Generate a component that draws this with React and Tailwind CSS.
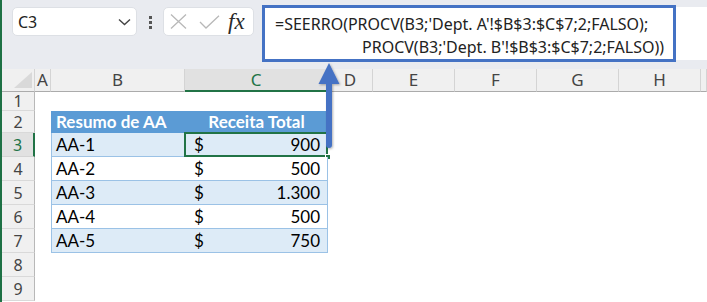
import React from "react";

const COLS = ["A", "B", "C", "D", "E", "F", "G", "H", ""];

const DATA = [
  { id: "AA-1", v: "900" },
  { id: "AA-2", v: "500" },
  { id: "AA-3", v: "1.300" },
  { id: "AA-4", v: "500" },
  { id: "AA-5", v: "750" },
];

function RowHeader({ n, active }) {
  return (
    <div
      className={
        "flex items-center justify-center border-b text-[16px] " +
        (active
          ? "bg-[#e1e1e1] text-[#217346] border-b-[#d4d4d4] border-r-2 border-r-[#217346]"
          : "bg-[#f0f0f0] text-[#444] border-b-[#d9d9d9] border-r border-r-[#b8b8b8]")
      }
      style={{ fontFamily: "'Noto Sans', sans-serif" }}
    >
      {n}
    </div>
  );
}

function ColHeader({ l, active }) {
  return (
    <div
      className={
        "flex items-center justify-center border-r border-r-[#d4d4d4] text-[17px] " +
        (active
          ? "bg-[#e1e1e1] text-[#217346] border-b-2 border-b-[#217346]"
          : "bg-[#f0f0f0] text-[#444] border-b border-b-[#ababab]")
      }
      style={{ fontFamily: "'Noto Sans', sans-serif" }}
    >
      {l}
    </div>
  );
}

export default function App() {
  const cell = "flex items-center";
  const font = { fontFamily: "Lato, 'Noto Sans', sans-serif" };
  return (
    <div className="relative flex h-[302px] w-[707px] overflow-hidden bg-white">
      <div className="w-[2px] shrink-0 bg-[#1e7145]" />
      <div className="flex min-w-0 flex-1 flex-col">
        {/* top bar */}
        <div
          className="flex h-[69px] shrink-0 items-start bg-[#e9ebf0]"
          style={{ fontFamily: "'Noto Sans', sans-serif" }}
        >
          <div className="ml-[10px] mt-[7px] flex h-[29px] w-[125px] items-center justify-between rounded-[5px] border border-[#dde0e5] bg-white pl-[5px] pr-[5px]">
            <span className="text-[16px] text-[#222]">C3</span>
            <svg width="13" height="8" viewBox="0 0 13 8">
              <path d="M1 1.5 L6.5 6.5 L12 1.5" fill="none" stroke="#444" strokeWidth="1.4" />
            </svg>
          </div>
          <div className="mt-[16px] flex w-[26px] flex-col items-center gap-[2px]">
            <div className="h-[3px] w-[3px] bg-[#555]" />
            <div className="h-[3px] w-[3px] bg-[#555]" />
            <div className="h-[3px] w-[3px] bg-[#555]" />
          </div>
          <div className="mt-[7px] flex h-[29px] w-[91px] items-center rounded-[5px] border border-[#dde0e5] bg-white pl-[6px]">
            <svg width="17" height="15" viewBox="0 0 17 15">
              <path d="M1 0.5 L16 14.5 M16 0.5 L1 14.5" stroke="#b8b8b8" strokeWidth="1.3" fill="none" />
            </svg>
            <svg className="ml-[12px]" width="21" height="14" viewBox="0 0 21 14">
              <path d="M1 7 L7 13 L20 0.8" stroke="#b8b8b8" strokeWidth="1.3" fill="none" />
            </svg>
            <span
              className="ml-[8px] text-[23px] italic leading-none text-[#2a2a2a]"
              style={{ fontFamily: "'Liberation Serif', serif" }}
            >
              fx
            </span>
          </div>
          <div className="ml-[8px] mt-[5px] h-[57px] w-[414px] border-[3px] border-[#4472c4] bg-white pl-[10px] pt-[5px] text-[16px] leading-[23px] text-[#222]">
            <div className="whitespace-nowrap">=SEERRO(PROCV(B3;'Dept. A'!$B$3:$C$7;2;FALSO);</div>
            <div className="whitespace-nowrap pl-[87px]">PROCV(B3;'Dept. B'!$B$3:$C$7;2;FALSO))</div>
          </div>
          <div className="mt-[7px] h-[53px] flex-1 bg-white" />
        </div>

        {/* sheet */}
        <div className="grid grid-cols-[33px_16px_134px_143px_45px_82px_82px_82px_82px_1fr] grid-rows-[23px_19px_22px_repeat(7,24px)]">
          {/* header row */}
          <div className="relative border-b border-r border-b-[#ababab] border-r-[#d4d4d4] bg-[#f0f0f0]">
            <svg className="absolute bottom-[3px] right-[2px]" width="18" height="16" viewBox="0 0 18 16">
              <path d="M0 16 L18 16 L18 0 Z" fill="#d9d9d9" />
            </svg>
          </div>
          {COLS.map((l) => (
            <ColHeader key={l || "x"} l={l} active={l === "C"} />
          ))}

          {/* row 1 */}
          <RowHeader n={1} />
          {COLS.map((l, i) => (
            <div key={"r1" + i} />
          ))}

          {/* row 2 */}
          <RowHeader n={2} />
          <div />
          <div
            className={cell + " bg-[#5b9bd5] pl-[5px] text-[17px] font-bold text-white"}
            style={font}
          >
            Resumo de AA
          </div>
          <div
            className={cell + " justify-center bg-[#5b9bd5] text-[17px] font-bold text-white"}
            style={font}
          >
            Receita Total
          </div>
          {COLS.slice(3).map((l, i) => (
            <div key={"r2" + i} />
          ))}

          {DATA.map((d, idx) => {
            const band = idx % 2 === 0 ? "bg-[#ddebf7]" : "bg-white";
            const n = idx + 3;
            return (
              <React.Fragment key={d.id}>
                <RowHeader n={n} active={n === 3} />
                <div />
                <div
                  className={cell + " border-b border-l border-[#9bc2e6] pl-[4px] text-[17px] text-black " + band}
                  style={font}
                >
                  {d.id}
                </div>
                <div
                  className={
                    "relative flex items-center justify-between border-b border-r border-[#9bc2e6] pl-[9px] pr-[7px] text-[17px] text-black " +
                    band
                  }
                  style={font}
                >
                  <span>$</span>
                  <span>{d.v}</span>
                  {n === 3 && (
                    <>
                      <div className="absolute -left-[1px] -top-[1px] bottom-[-1px] right-[-1px] border-2 border-[#217346]" />
                      <div className="absolute -bottom-[4px] -right-[4px] h-[6px] w-[6px] border border-white bg-[#217346]" />
                    </>
                  )}
                </div>
                {COLS.slice(3).map((l, i) => (
                  <div key={"r" + n + i} />
                ))}
              </React.Fragment>
            );
          })}

          {[8, 9].map((n) => (
            <React.Fragment key={n}>
              <RowHeader n={n} />
              {COLS.map((l, i) => (
                <div key={"e" + n + i} />
              ))}
            </React.Fragment>
          ))}
        </div>
      </div>

      {/* annotation arrow */}
      <svg className="pointer-events-none absolute left-0 top-0" width="707" height="302" viewBox="0 0 707 302">
        <defs>
          <filter id="sh" x="-50%" y="-10%" width="200%" height="130%">
            <feDropShadow dx="1" dy="1" stdDeviation="0.8" floodColor="#000" floodOpacity="0.3" />
          </filter>
        </defs>
        <g filter="url(#sh)">
          <rect x="326" y="78" width="6" height="70" rx="3" fill="#4472c4" />
          <path d="M329 63 L339.5 84 L318.5 84 Z" fill="#4472c4" />
        </g>
      </svg>
    </div>
  );
}
